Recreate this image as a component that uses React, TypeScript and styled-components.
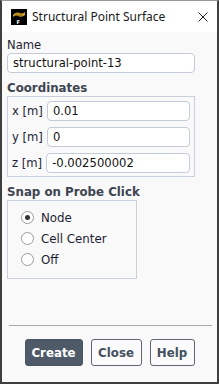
import React from 'react'
import styled, { createGlobalStyle } from 'styled-components'

const GlobalStyle = createGlobalStyle`
  html, body {
    margin: 0;
    padding: 0;
    background: #ffffff;
  }
  * {
    box-sizing: border-box;
  }
`

const uiFont = `'DejaVu Sans', 'Liberation Sans', sans-serif`

const Window = styled.div`
  width: 219px;
  height: 384px;
  display: flex;
  flex-direction: column;
  border: 2px solid #3f3f3f;
  border-top: 1px solid #9a9a9a;
  background: #f9f9f9;
  font-family: ${uiFont};
`

const TitleBar = styled.div`
  height: 31px;
  flex: none;
  display: flex;
  align-items: center;
  padding: 0 9px;
  background: #ffffff;
  font-family: 'Noto Sans', 'Open Sans', sans-serif;
  font-size: 12px;
  color: #1a1a1a;
`

const TitleText = styled.span`
  margin-left: 5px;
  flex: 1;
`

const Body = styled.div`
  flex: 1;
  display: flex;
  flex-direction: column;
  padding: 5px 5px 16px 5px;
`

const Column = styled.div`
  width: 188px;
  flex: none;
  display: flex;
  flex-direction: column;
`

const Label = styled.div<{ $bold?: boolean }>`
  height: 16px;
  flex: none;
  line-height: 16px;
  font-size: ${p => (p.$bold ? '11.8px' : '11.6px')};
  font-weight: ${p => (p.$bold ? 700 : 400)};
  color: ${p => (p.$bold ? '#3e4452' : '#1d1d33')};
  margin-top: ${p => (p.$bold ? '7px' : '0')};
  white-space: nowrap;
`

const TextInput = styled.div<{ $grow?: boolean }>`
  height: 20px;
  flex: ${p => (p.$grow ? '1 1 auto' : 'none')};
  display: flex;
  align-items: center;
  padding-left: 5px;
  background: #ffffff;
  border: 1px solid #c4ccd8;
  border-radius: 4px;
  font-size: 11.6px;
  color: #111;
  white-space: nowrap;
`

const GroupBox = styled.div<{ $width?: number }>`
  width: ${p => (p.$width ? `${p.$width}px` : '100%')};
  flex: none;
  border: 1px solid #c8d0dc;
  display: flex;
  flex-direction: column;
`

const CoordBox = styled(GroupBox)`
  padding: 4px 4px 3px 4px;
  gap: 6px;
`

const CoordRow = styled.div`
  height: 20px;
  display: flex;
  align-items: center;
  gap: 4px;
  font-size: 11.6px;
  color: #1d1d33;
  white-space: nowrap;
`

const RadioBox = styled(GroupBox)`
  padding: 6px 8px 8px 13px;
`

const RadioRow = styled.div`
  height: 21px;
  flex: none;
  display: flex;
  align-items: center;
  gap: 7px;
  font-size: 11.8px;
  color: #1d1d33;
`

const RadioCircle = styled.span<{ $checked?: boolean }>`
  width: 13px;
  height: 13px;
  flex: none;
  border-radius: 50%;
  border: 1px solid #9a9a9a;
  background: #ffffff;
  display: flex;
  align-items: center;
  justify-content: center;
  &::after {
    content: '';
    width: 5px;
    height: 5px;
    border-radius: 50%;
    background: ${p => (p.$checked ? '#333' : 'transparent')};
  }
`

const Spacer = styled.div`
  flex: 1;
`

const Separator = styled.div`
  height: 1px;
  flex: none;
  margin-left: 2px;
  background: #a8a8a8;
`

const ButtonRow = styled.div`
  display: flex;
  justify-content: center;
  gap: 8px;
  margin-top: 13px;
`

const Button = styled.button<{ $primary?: boolean; $width: number }>`
  width: ${p => p.$width}px;
  height: 27px;
  padding: 0;
  border-radius: 3px;
  border: 1px solid ${p => (p.$primary ? '#4b5562' : '#5f6672')};
  background: ${p => (p.$primary ? '#4f5a68' : '#fbfbfb')};
  color: ${p => (p.$primary ? '#ffffff' : '#45505f')};
  font-family: ${uiFont};
  font-size: 11.8px;
  font-weight: 700;
`

const AppIcon = () => (
  <svg width="16" height="16" viewBox="0 0 16 16">
    <rect width="16" height="16" fill="#000" />
    <path d="M2 6 C4 3, 7 3, 9 4 C11 5, 13 4, 14 3 L14 6 C12 8, 9 8, 7 7 C5 6, 3 7, 2 8 Z" fill="#d4a12a" />
    <path d="M4 5 L12 5 M5 6.5 L11 6.5" stroke="#7a5a10" strokeWidth="0.6" />
    <text x="5.5" y="15" fontSize="5" fontFamily="DejaVu Sans" fontWeight="700" fill="#fff">F</text>
  </svg>
)

const CloseIcon = () => (
  <svg width="10" height="10" viewBox="0 0 10 10">
    <path d="M0.5 0.5 L9.5 9.5 M9.5 0.5 L0.5 9.5" stroke="#222" strokeWidth="1" />
  </svg>
)

const coords = [
  { label: 'x [m]', value: '0.01' },
  { label: 'y [m]', value: '0' },
  { label: 'z [m]', value: '-0.002500002' },
]

const snapOptions = ['Node', 'Cell Center', 'Off']

export default function App() {
  return (
    <>
      <GlobalStyle />
      <Window>
        <TitleBar>
          <AppIcon />
          <TitleText>Structural Point Surface</TitleText>
          <CloseIcon />
        </TitleBar>
        <Body>
          <Column>
            <Label>Name</Label>
            <TextInput>structural-point-13</TextInput>
            <Label $bold>Coordinates</Label>
            <CoordBox>
              {coords.map(c => (
                <CoordRow key={c.label}>
                  {c.label}
                  <TextInput $grow>{c.value}</TextInput>
                </CoordRow>
              ))}
            </CoordBox>
            <Label $bold>Snap on Probe Click</Label>
            <RadioBox $width={130}>
              {snapOptions.map((o, i) => (
                <RadioRow key={o}>
                  <RadioCircle $checked={i === 0} />
                  {o}
                </RadioRow>
              ))}
            </RadioBox>
          </Column>
          <Spacer />
          <Separator />
          <ButtonRow>
            <Button $primary $width={58}>Create</Button>
            <Button $width={51}>Close</Button>
            <Button $width={45}>Help</Button>
          </ButtonRow>
        </Body>
      </Window>
    </>
  )
}
